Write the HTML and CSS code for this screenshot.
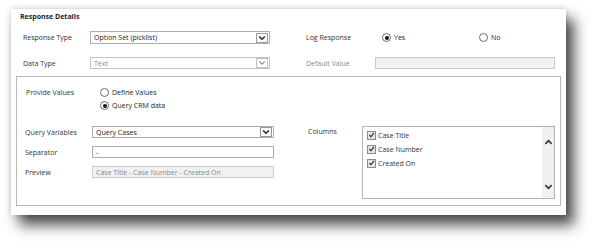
FILE: index.html
```html
<!DOCTYPE html>
<html lang="en">
<head>
    <meta charset="UTF-8">
    <title>Response Details</title>
    <link rel="stylesheet" href="styles.css">
</head>
<body>
    <div class="card">
        <div class="title">Response Details</div>

        <!-- Response type / log response -->
        <div class="row row-first">
            <span class="label">Response Type</span>
            <div class="select">
                <span class="value">Option Set (picklist)</span>
                <span class="drop"><svg viewBox="0 0 10 10" width="8" height="8"><path d="M1.5 3 L5 6.5 L8.5 3" fill="none" stroke="#1c2b3d" stroke-width="1.8"/></svg></span>
            </div>
            <span class="label label-right">Log Response</span>
            <div class="radios">
                <div class="radio-item"><span class="radio checked"></span>Yes</div>
                <div class="radio-item"><span class="radio"></span>No</div>
            </div>
        </div>

        <!-- Data type / default value -->
        <div class="row row-second">
            <span class="label">Data Type</span>
            <div class="select disabled">
                <span class="value">Text</span>
                <span class="drop"><svg viewBox="0 0 10 10" width="8" height="8"><path d="M1.5 3 L5 6.5 L8.5 3" fill="none" stroke="#8a8a8a" stroke-width="1.4"/></svg></span>
            </div>
            <span class="label label-right muted">Default Value</span>
            <div class="input disabled wide"></div>
        </div>

        <!-- Provide values section -->
        <div class="inner">
            <div class="provide">
                <span class="label label-provide">Provide Values</span>
                <div class="radio-list">
                    <div class="radio-item"><span class="radio"></span>Define Values</div>
                    <div class="radio-item"><span class="radio checked"></span>Query CRM data</div>
                </div>
            </div>

            <div class="query">
                <div class="query-left">
                    <div class="qrow">
                        <span class="label label-q">Query Variables</span>
                        <div class="select q-field">
                            <span class="value">Query Cases</span>
                            <span class="drop"><svg viewBox="0 0 10 10" width="8" height="8"><path d="M1.5 3 L5 6.5 L8.5 3" fill="none" stroke="#1c2b3d" stroke-width="1.8"/></svg></span>
                        </div>
                    </div>
                    <div class="qrow">
                        <span class="label label-q">Separator</span>
                        <div class="input q-field">-</div>
                    </div>
                    <div class="qrow">
                        <span class="label label-q">Preview</span>
                        <div class="input disabled q-field">Case Title - Case Number - Created On</div>
                    </div>
                </div>

                <div class="query-right">
                    <span class="label label-columns">Columns</span>
                    <div class="listbox">
                        <div class="list-items">
                            <div class="check-item"><span class="check"><svg viewBox="0 0 10 10" width="8" height="8"><path d="M2 5.2 L4.2 7.5 L8.5 2" fill="none" stroke="#222" stroke-width="1.6"/></svg></span>Case Title</div>
                            <div class="check-item"><span class="check"><svg viewBox="0 0 10 10" width="8" height="8"><path d="M2 5.2 L4.2 7.5 L8.5 2" fill="none" stroke="#222" stroke-width="1.6"/></svg></span>Case Number</div>
                            <div class="check-item"><span class="check"><svg viewBox="0 0 10 10" width="8" height="8"><path d="M2 5.2 L4.2 7.5 L8.5 2" fill="none" stroke="#222" stroke-width="1.6"/></svg></span>Created On</div>
                        </div>
                        <div class="scrollbar">
                            <svg viewBox="0 0 10 10" width="9" height="9"><path d="M1.5 6.5 L5 3 L8.5 6.5" fill="none" stroke="#1f3856" stroke-width="1.8"/></svg>
                            <svg viewBox="0 0 10 10" width="9" height="9"><path d="M1.5 3.5 L5 7 L8.5 3.5" fill="none" stroke="#1f3856" stroke-width="1.8"/></svg>
                        </div>
                    </div>
                </div>
            </div>
        </div>
    </div>
</body>
</html>
```

FILE: styles.css
```css
/* Page */
body {
    margin: 0;
    padding: 9px 0 34px 11px;
    background-color: #fff;
    font-family: "Open Sans", "Noto Sans", sans-serif;
    font-size: 7px;
    color: #3a3a3a;
}

/* Card with the dropped shadow */
.card {
    box-sizing: border-box;
    width: 555px;
    height: 206px;
    padding: 3px 0 0 0;
    background-color: #fff;
    box-shadow: 0 0 6px rgba(0, 0, 0, 0.18), 8px 10px 13px rgba(0, 0, 0, 0.7);
}

.title {
    height: 10px;
    line-height: 10px;
    padding-left: 9px;
    font-weight: bold;
    color: #1e1e1e;
}

/* Top rows */
.row {
    display: flex;
    align-items: center;
    padding-left: 12px;
}

.row-first {
    height: 13px;
    margin-top: 9px;
}

.row-second {
    height: 12px;
    margin-top: 13px;
}

.label {
    flex: none;
    width: 67px;
    color: #333;
}

.label-right {
    width: 69px;
    margin-left: 36px;
}

.muted {
    color: #8a8a8a;
}

/* Fake select / input boxes */
.select, .input {
    box-sizing: border-box;
    flex: none;
    display: flex;
    align-items: center;
    width: 180px;
    height: 100%;
    border: 1px solid #aeaeae;
    background-color: #fff;
    color: #222;
    padding-left: 3px;
}

.select .value {
    flex: 1;
}

.drop {
    box-sizing: border-box;
    display: flex;
    align-items: center;
    justify-content: center;
    width: 12px;
    height: 10px;
    margin-right: 1px;
    border: 1px solid #9a9a9a;
    background-color: #f8f8f8;
}

.select.disabled {
    border-color: #c4c4c4;
    color: #8a8a8a;
}

.select.disabled .drop {
    border-color: #c0c0c0;
    background-color: #fff;
}

.input.disabled {
    background-color: #f1f1f1;
    border-color: #cbcbcb;
    color: #8a8a8a;
}

.input.wide {
    width: 180px;
    height: 12px;
}

/* Radio buttons */
.radios {
    flex: none;
    display: flex;
    margin-left: 7px;
}

.radios .radio-item:first-child {
    width: 97px;
}

.radio-item {
    display: flex;
    align-items: center;
    color: #222;
}

.radio {
    box-sizing: border-box;
    display: inline-flex;
    align-items: center;
    justify-content: center;
    width: 9px;
    height: 9px;
    margin-right: 3px;
    border: 1px solid #6c6c6c;
    border-radius: 50%;
    background-color: #fff;
}

.radio.checked::after {
    content: "";
    width: 4px;
    height: 4px;
    border-radius: 50%;
    background-color: #111;
}

/* Inner box */
.inner {
    box-sizing: border-box;
    width: 545px;
    height: 130px;
    margin: 7px 0 0 5px;
    border: 1px solid #b8b8b8;
}

.provide {
    display: flex;
    padding: 9px 0 0 9px;
}

.label-provide {
    width: 74px;
}

.label-provide, .radio-list .radio-item {
    height: 13px;
    line-height: 13px;
}

.query {
    display: flex;
    margin-top: 14px;
}

.query-left {
    display: flex;
    flex-direction: column;
    gap: 8px;
    padding-left: 8px;
}

.qrow {
    display: flex;
    align-items: center;
    height: 12px;
}

.q-field {
    width: 182px;
}

.query-right {
    display: flex;
    margin-left: 34px;
}

.label-columns {
    width: 54px;
    height: 12px;
    line-height: 12px;
}

/* Columns list box */
.listbox {
    box-sizing: border-box;
    display: flex;
    width: 193px;
    height: 73px;
    border: 1px solid #b4b4b4;
    background-color: #fff;
}

.list-items {
    flex: 1;
    padding: 1px 0 0 4px;
}

.check-item {
    display: flex;
    align-items: center;
    height: 14px;
    color: #333;
}

.check {
    box-sizing: border-box;
    display: inline-flex;
    align-items: center;
    justify-content: center;
    width: 9px;
    height: 9px;
    margin-right: 2px;
    border: 1px solid #8c8c8c;
    background-color: #e4e4e4;
}

.scrollbar {
    display: flex;
    flex-direction: column;
    justify-content: space-between;
    align-items: center;
    width: 12px;
    padding: 11px 0 7px;
    background-color: #f0f0f0;
}
```
